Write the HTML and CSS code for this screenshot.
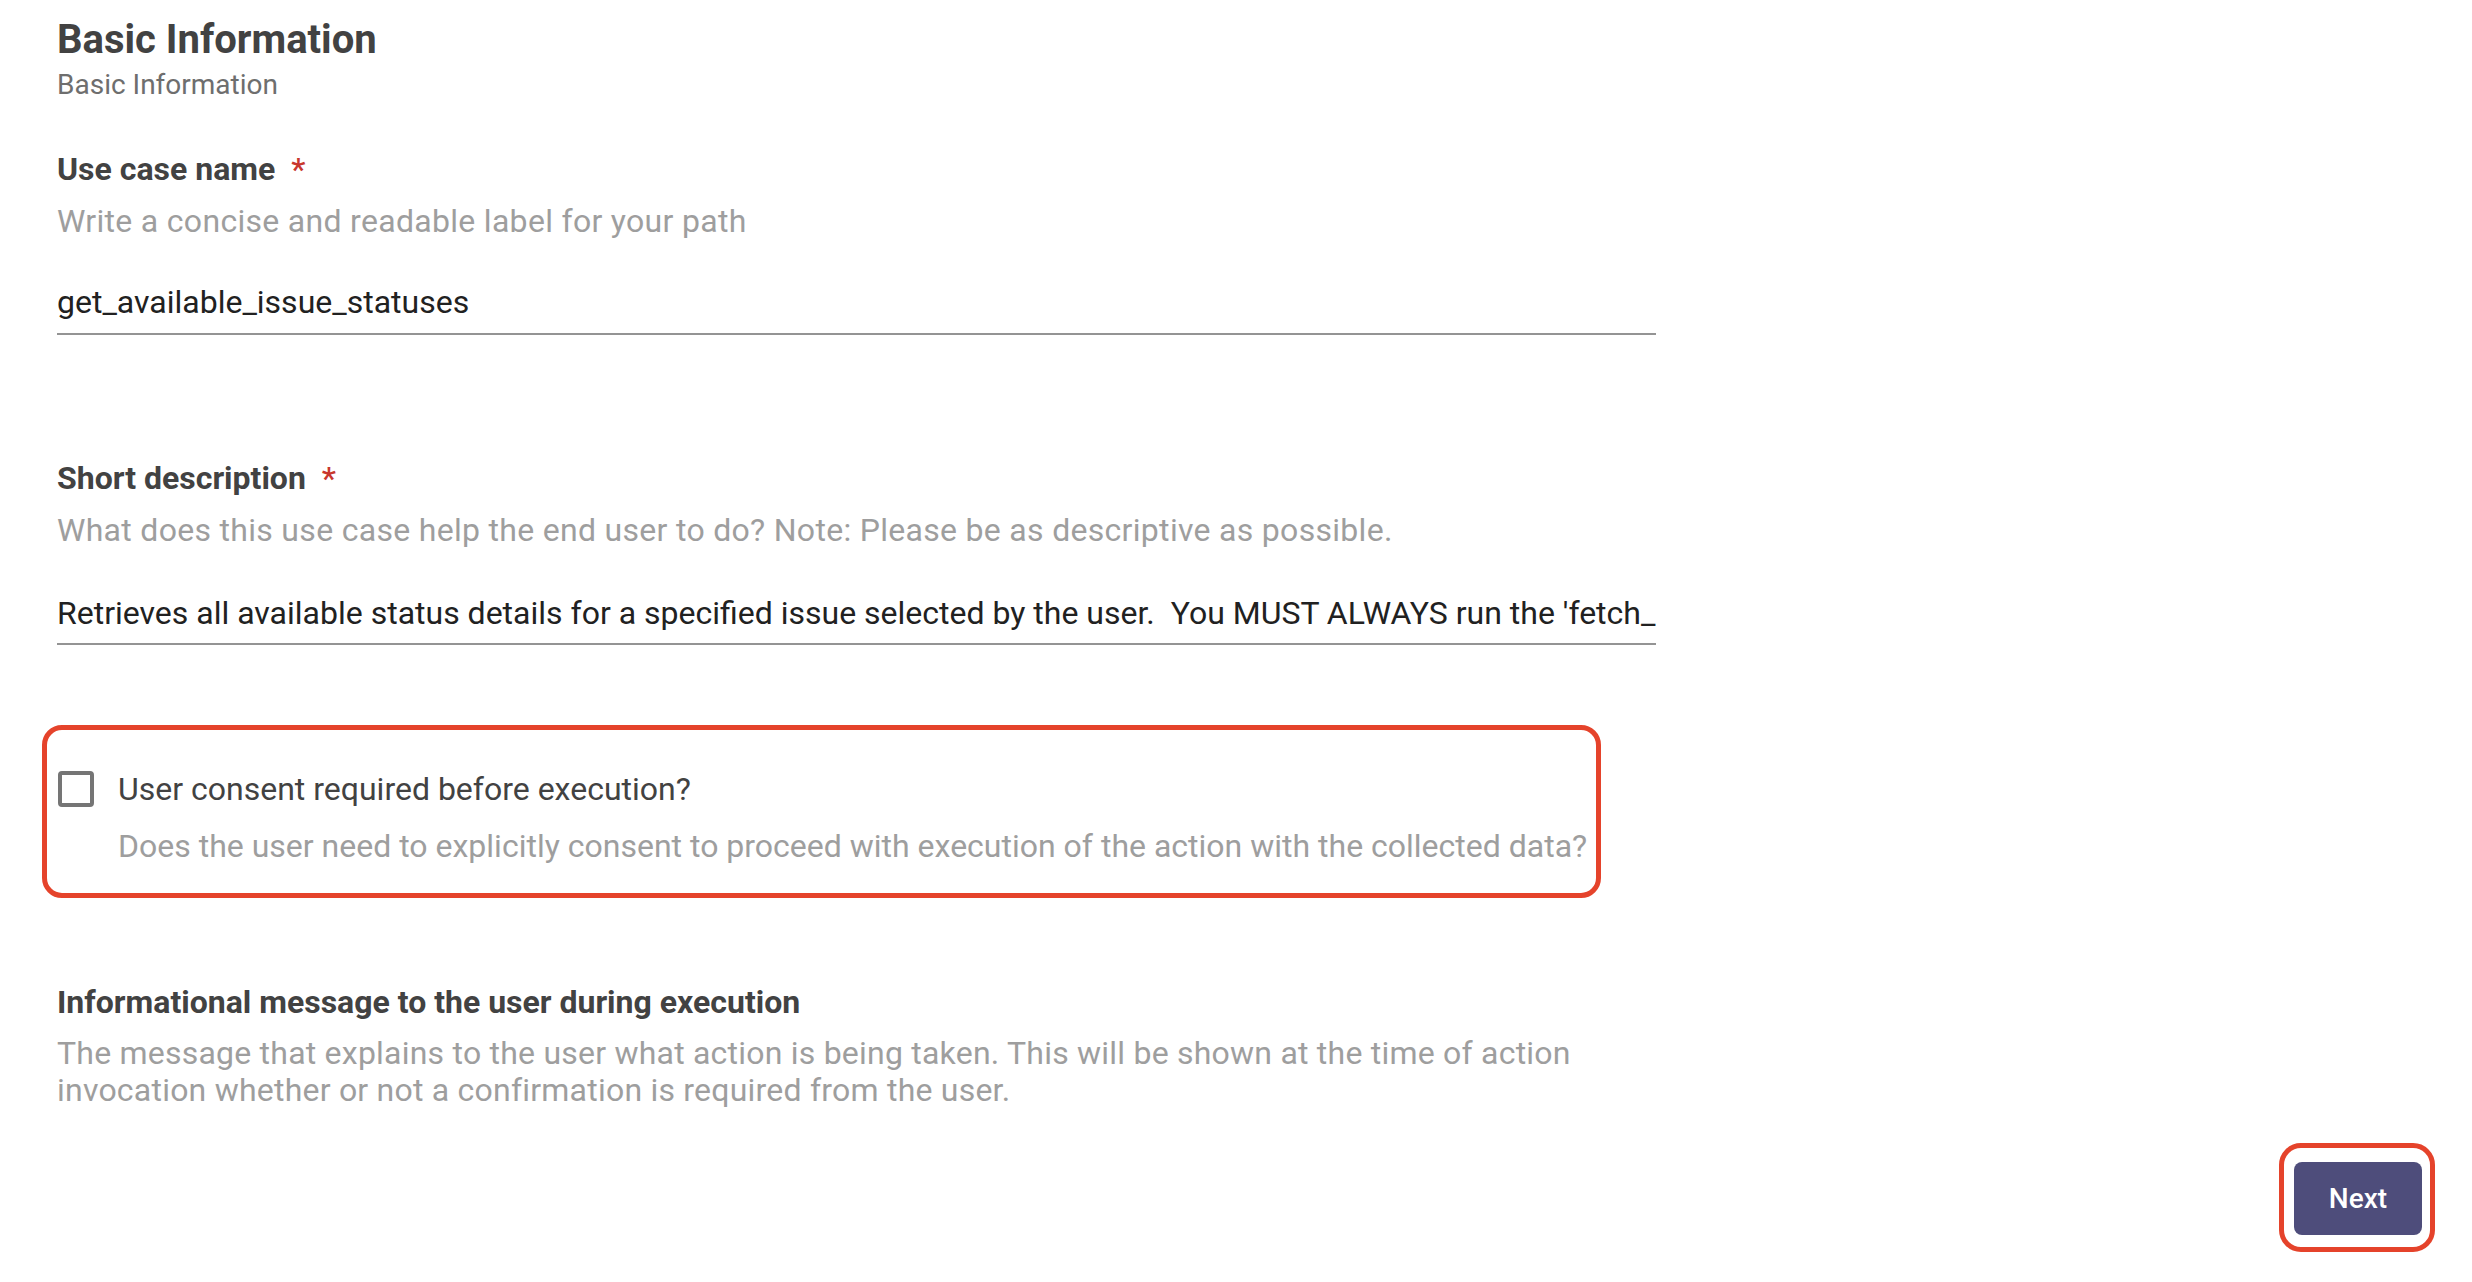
FILE: index.html
```html
<!DOCTYPE html>
<html lang="en">
<head>
<meta charset="utf-8">
<title>Basic Information</title>
<link rel="stylesheet" href="styles.css">
</head>
<body>
<main class="page">
  <header class="section-head">
    <h1 class="title">Basic Information</h1>
    <p class="subtitle">Basic Information</p>
  </header>

  <div class="field field-name">
    <label class="label" for="name">Use case name<span class="req">*</span></label>
    <p class="helper">Write a concise and readable label for your path</p>
    <input id="name" class="text-input" type="text" value="get_available_issue_statuses">
  </div>

  <div class="field field-desc">
    <label class="label" for="desc">Short description<span class="req">*</span></label>
    <p class="helper">What does this use case help the end user to do? Note: Please be as descriptive as possible.</p>
    <input id="desc" class="text-input" type="text" value="Retrieves all available status details for a specified issue selected by the user.  You MUST ALWAYS run the 'fetch_current_issue' tool first to get the issue key.">
  </div>

  <div class="consent">
    <div class="consent-row">
      <span class="checkbox"></span>
      <span class="consent-label">User consent required before execution?</span>
    </div>
    <p class="helper consent-help">Does the user need to explicitly consent to proceed with execution of the action with the collected data?</p>
  </div>

  <div class="field field-info">
    <div class="label">Informational message to the user during execution</div>
    <p class="helper info-help">The message that explains to the user what action is being taken. This will be shown at the time of action invocation whether or not a confirmation is required from the user.</p>
  </div>

  <footer class="actions">
    <div class="highlight">
      <button class="btn-next" type="button">Next</button>
    </div>
  </footer>
</main>
</body>
</html>
```

FILE: styles.css
```css
html, body {
  margin: 0;
  padding: 0;
  background: #ffffff;
}

body {
  font-family: Roboto, "Noto Sans", "Liberation Sans", sans-serif;
  color: #424242;
}

.page {
  padding: 16px 37px 0 57px;
  display: flex;
  flex-direction: column;
}

.section-head {
  display: flex;
  flex-direction: column;
  gap: 4px;
}

.title {
  margin: 0;
  font-size: 40px;
  line-height: 48px;
  font-weight: 700;
  color: #424242;
}

.subtitle {
  margin: 0;
  font-size: 28px;
  line-height: 34px;
  font-weight: 400;
  color: #6e6e6e;
}

.field {
  width: 1599px;
  display: flex;
  flex-direction: column;
}

.field-name {
  margin-top: 48px;
}

.field-desc {
  margin-top: 124px;
}

.label {
  display: block;
  font-size: 32px;
  line-height: 38px;
  font-weight: 700;
  color: #424242;
}

.req {
  color: #c8372d;
  margin-left: 16px;
  font-weight: 500;
}

.helper {
  margin: 14px 0 0;
  font-size: 32px;
  line-height: 38px;
  font-weight: 400;
  color: #9e9e9e;
}

.field .helper {
  letter-spacing: 0.3px;
}

.field .info-help {
  letter-spacing: 0.22px;
  line-height: 37px;
}

.text-input {
  margin-top: 43px;
  width: 100%;
  box-sizing: border-box;
  border: none;
  border-bottom: 2px solid #949494;
  padding: 0 0 12px;
  font-family: Roboto, "Noto Sans", "Liberation Sans", sans-serif;
  font-size: 32px;
  line-height: 38px;
  height: 52px;
  color: #212121;
  background: transparent;
  outline: none;
}

.field-desc .text-input {
  margin-top: 45px;
  padding-bottom: 11px;
  height: 51px;
}

.consent {
  margin-top: 80px;
  margin-left: -15px;
  width: 1559px;
  box-sizing: border-box;
  border: 5px solid #e5432b;
  border-radius: 20px;
  padding: 40px 0 28px 11px;
}

.consent-row {
  display: flex;
  align-items: center;
  gap: 24px;
}

.checkbox {
  width: 36px;
  height: 36px;
  box-sizing: border-box;
  border: 4px solid #757575;
  border-radius: 4px;
  flex: none;
}

.consent-label {
  font-size: 32px;
  line-height: 38px;
  color: #424242;
}

.consent-help {
  margin: 19px 0 0 60px;
}

.field-info {
  margin-top: 85px;
}

.actions {
  margin-top: 34px;
  display: flex;
  justify-content: flex-end;
}

.highlight {
  border: 5px solid #e5432b;
  border-radius: 22px;
  padding: 14px 8px 12px 10px;
}

.btn-next {
  display: block;
  width: 128px;
  height: 73px;
  border: none;
  border-radius: 8px;
  background: #4e4d7b;
  color: #ffffff;
  font-family: Roboto, "Noto Sans", "Liberation Sans", sans-serif;
  font-size: 28px;
  font-weight: 500;
  padding: 0;
  cursor: pointer;
}
```
